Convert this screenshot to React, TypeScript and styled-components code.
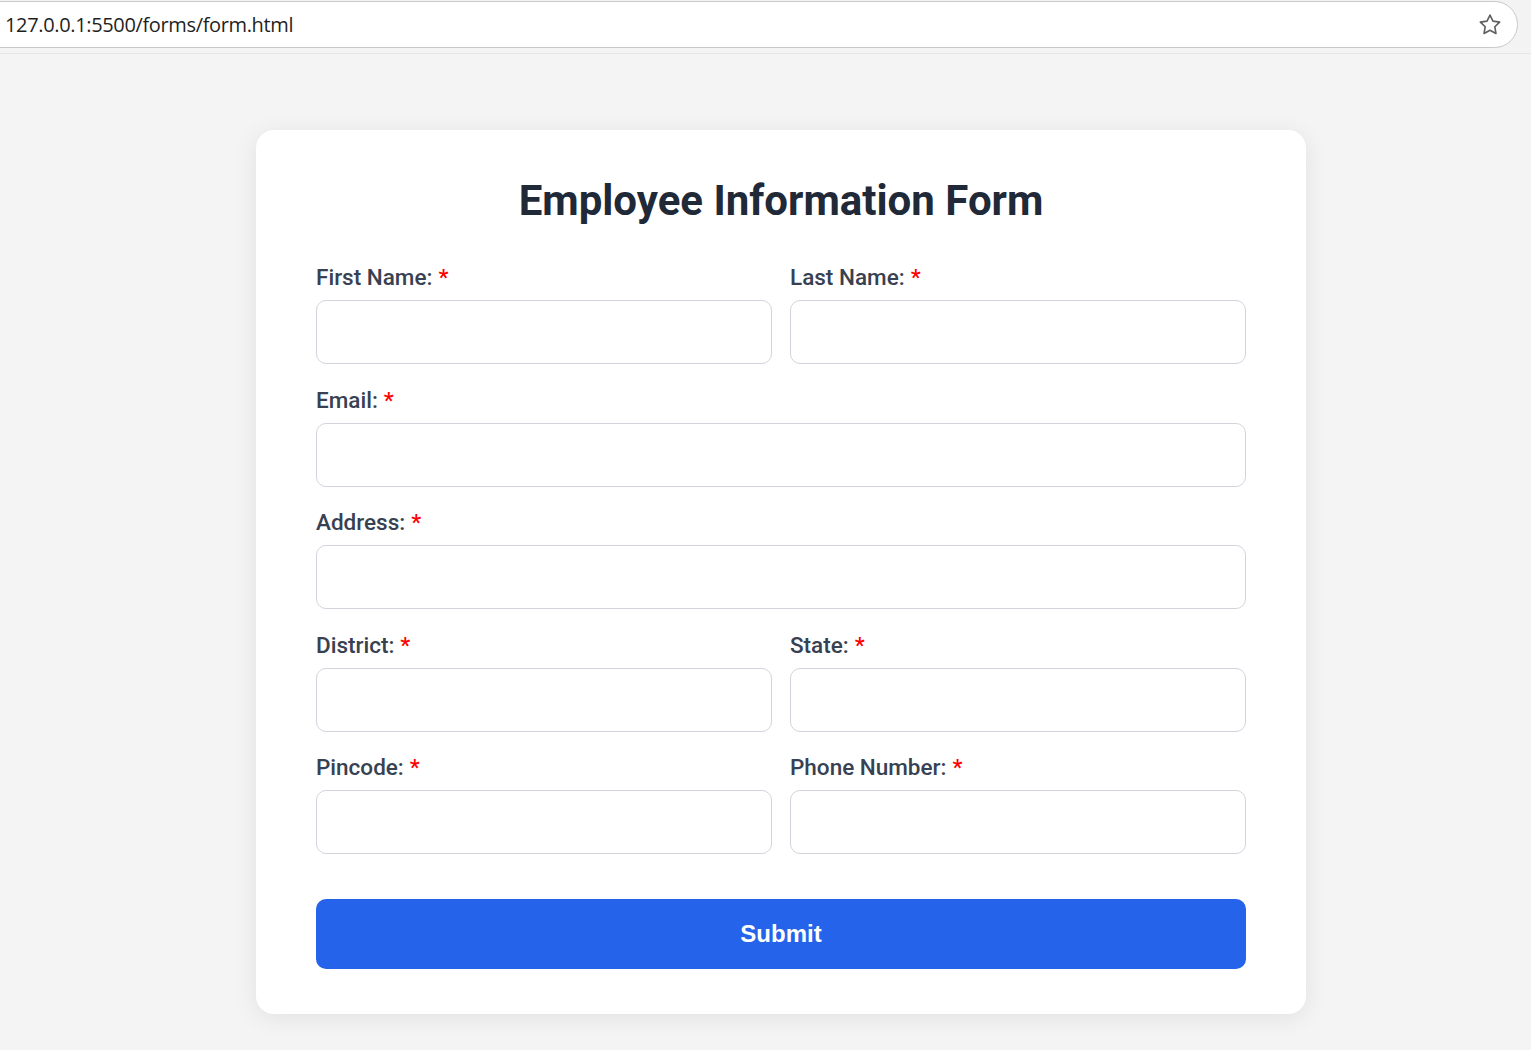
import React from "react";
import styled, { createGlobalStyle } from "styled-components";

const Global = createGlobalStyle`
  * { box-sizing: border-box; }
  html, body { margin: 0; padding: 0; }
  body {
    background: #f4f4f4;
    font-family: Roboto, "Liberation Sans", sans-serif;
  }
`;

const TopBar = styled.div`
  height: 54px;
  background: #f3f3f3;
  border-bottom: 1px solid #e6e6e6;
  padding-top: 1px;
  overflow: hidden;
`;

const UrlPill = styled.div`
  height: 47px;
  margin-left: -24px;
  margin-right: 13px;
  background: #ffffff;
  border: 1px solid #c9c9c9;
  border-radius: 24px;
  display: flex;
  align-items: center;
  justify-content: space-between;
  padding: 0 14px 0 28px;
`;

const UrlText = styled.span`
  font-family: "Open Sans", "Noto Sans", sans-serif;
  font-size: 20px;
  color: #1f1f1f;
  letter-spacing: -0.35px;
`;

const Page = styled.main`
  padding: 76px 0 40px 31px;
  display: flex;
  justify-content: center;
`;

const Card = styled.form`
  width: 1050px;
  background: #ffffff;
  border-radius: 18px;
  box-shadow: 0 4px 24px rgba(0, 0, 0, 0.08);
  padding: 47px 60px 45px;
  display: flex;
  flex-direction: column;
`;

const Title = styled.h2`
  margin: 0 0 39px;
  text-align: center;
  font-size: 42px;
  line-height: 48px;
  font-weight: 700;
  color: #1f2937;
`;

const Grid = styled.div`
  display: grid;
  grid-template-columns: 1fr 1fr;
  column-gap: 18px;
  row-gap: 22.5px;
`;

const Field = styled.div<{ $full?: boolean }>`
  display: flex;
  flex-direction: column;
  gap: 9px;
  grid-column: ${(p) => (p.$full ? "1 / -1" : "auto")};
`;

const Label = styled.label`
  font-size: 22.5px;
  line-height: 27px;
  font-weight: 500;
  color: #374151;
`;

const Req = styled.span`
  color: #ff0000;
  margin-left: 6px;
`;

const Input = styled.input`
  height: 64px;
  width: 100%;
  border: 1px solid #d1d5db;
  border-radius: 10px;
  background: #ffffff;
  font-size: 20px;
  padding: 0 16px;
  outline: none;
`;

const Submit = styled.button`
  margin-top: 45px;
  height: 70px;
  width: 100%;
  border: none;
  border-radius: 10px;
  background: #2563eb;
  color: #ffffff;
  font-family: "Liberation Sans", Arial, sans-serif;
  font-weight: 700;
  font-size: 24px;
  cursor: pointer;
`;

const Star = () => (
  <svg width="26" height="26" viewBox="0 0 24 24" fill="none" stroke="#5f5f5f" strokeWidth="1.5" strokeLinejoin="round">
    <path d="M12 2.8l2.75 5.6 6.15.9-4.45 4.35 1.05 6.15L12 16.9l-5.5 2.9 1.05-6.15L3.1 9.3l6.15-.9z" />
  </svg>
);

const fields: { label: string; full?: boolean }[] = [
  { label: "First Name:" },
  { label: "Last Name:" },
  { label: "Email:", full: true },
  { label: "Address:", full: true },
  { label: "District:" },
  { label: "State:" },
  { label: "Pincode:" },
  { label: "Phone Number:" },
];

export default function App() {
  return (
    <>
      <Global />
      <TopBar>
        <UrlPill>
          <UrlText>127.0.0.1:5500/forms/form.html</UrlText>
          <Star />
        </UrlPill>
      </TopBar>
      <Page>
        <Card onSubmit={(e) => e.preventDefault()}>
          <Title>Employee Information Form</Title>
          <Grid>
            {fields.map((f) => (
              <Field key={f.label} $full={f.full}>
                <Label>
                  {f.label}
                  <Req>*</Req>
                </Label>
                <Input type="text" />
              </Field>
            ))}
          </Grid>
          <Submit type="submit">Submit</Submit>
        </Card>
      </Page>
    </>
  );
}
